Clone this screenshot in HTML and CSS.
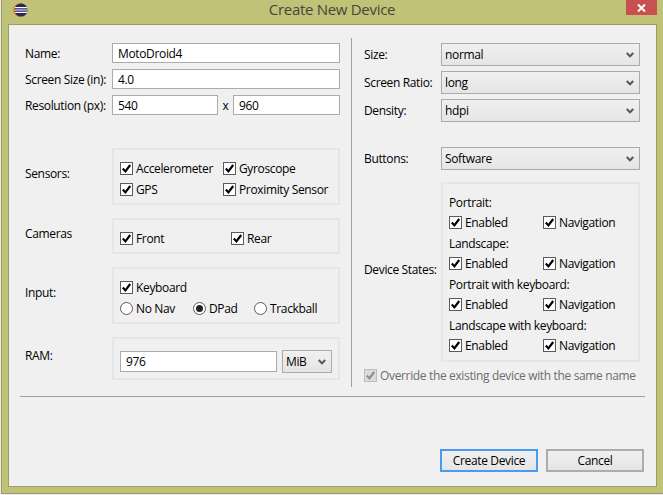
FILE: index.html
```html
<!DOCTYPE html>
<html lang="en">

<head>
    <meta charset="UTF-8">
    <title>Create New Device</title>
    <link rel="stylesheet" href="styles.css">
</head>

<body>
    <svg class="defs" width="0" height="0">
        <symbol id="tick" viewBox="0 0 13 13">
            <path d="M2.8 6.6 5.4 9.4 10.2 3" fill="none" stroke="currentColor" stroke-width="2.2" />
        </symbol>
        <symbol id="chev" viewBox="0 0 8 6">
            <path d="M.8 1 4 4.4 7.2 1" fill="none" stroke="#555" stroke-width="2" />
        </symbol>
    </svg>

    <div class="window">
        <div class="titlebar">
            <svg class="app-icon" width="15" height="14" viewBox="0 0 15 14">
                <circle cx="7" cy="7" r="6.8" fill="#e88a1c" />
                <circle cx="8" cy="7" r="6.6" fill="#2c2560" />
                <path d="M2 4.6h12M1.4 7h13M2 9.4h12" stroke="#fff" stroke-width="1.1" />
            </svg>
            <div class="title">Create New Device</div>
            <div class="close">
                <svg width="9" height="8" viewBox="0 0 9 8">
                    <path d="M1 .5 8 7.5M8 .5 1 7.5" stroke="#fff" stroke-width="2" />
                </svg>
            </div>
        </div>

        <div class="content">
            <div class="columns">
                <div class="left">
                    <div class="field">
                        <label class="lbl">Name:</label>
                        <input class="txt wide" type="text" value="MotoDroid4">
                    </div>
                    <div class="field">
                        <label class="lbl">Screen Size (in):</label>
                        <input class="txt wide" type="text" value="4.0">
                    </div>
                    <div class="field">
                        <label class="lbl">Resolution (px):</label>
                        <input class="txt res-w" type="text" value="540">
                        <span class="times">x</span>
                        <input class="txt res-h" type="text" value="960">
                    </div>

                    <div class="grp-row first">
                        <label class="lbl up">Sensors:</label>
                        <div class="group">
                            <div class="row">
                                <div class="opt sensor"><span class="check"><svg><use href="#tick" /></svg></span>Accelerometer</div>
                                <div class="opt"><span class="check"><svg><use href="#tick" /></svg></span>Gyroscope</div>
                            </div>
                            <div class="row">
                                <div class="opt sensor"><span class="check"><svg><use href="#tick" /></svg></span>GPS</div>
                                <div class="opt"><span class="check"><svg><use href="#tick" /></svg></span>Proximity Sensor</div>
                            </div>
                        </div>
                    </div>

                    <div class="grp-row">
                        <label class="lbl up">Cameras</label>
                        <div class="group">
                            <div class="row">
                                <div class="opt camera"><span class="check"><svg><use href="#tick" /></svg></span>Front</div>
                                <div class="opt"><span class="check"><svg><use href="#tick" /></svg></span>Rear</div>
                            </div>
                        </div>
                    </div>

                    <div class="grp-row">
                        <label class="lbl up">Input:</label>
                        <div class="group">
                            <div class="row">
                                <div class="opt"><span class="check"><svg><use href="#tick" /></svg></span>Keyboard</div>
                            </div>
                            <div class="row">
                                <div class="opt nonav"><span class="radio"></span>No Nav</div>
                                <div class="opt dpad"><span class="radio on"></span>DPad</div>
                                <div class="opt"><span class="radio"></span>Trackball</div>
                            </div>
                        </div>
                    </div>

                    <div class="grp-row">
                        <label class="lbl up">RAM:</label>
                        <div class="group ram">
                            <input class="txt ram-val" type="text" value="976">
                            <div class="select ram-unit">MiB<svg class="chev"><use href="#chev" /></svg></div>
                        </div>
                    </div>
                </div>

                <div class="right">
                    <div class="sel-list">
                        <div class="sel-row">
                            <label class="lbl-r">Size:</label>
                            <div class="select full">normal<svg class="chev"><use href="#chev" /></svg></div>
                        </div>
                        <div class="sel-row">
                            <label class="lbl-r">Screen Ratio:</label>
                            <div class="select full">long<svg class="chev"><use href="#chev" /></svg></div>
                        </div>
                        <div class="sel-row">
                            <label class="lbl-r">Density:</label>
                            <div class="select full">hdpi<svg class="chev"><use href="#chev" /></svg></div>
                        </div>
                    </div>

                    <div class="sel-row buttons-row">
                        <label class="lbl-r">Buttons:</label>
                        <div class="select full">Software<svg class="chev"><use href="#chev" /></svg></div>
                    </div>

                    <div class="states-row">
                        <label class="lbl-r up">Device States:</label>
                        <div class="group states">
                            <div class="state">
                                <div class="row">Portrait:</div>
                                <div class="row">
                                    <div class="opt state-opt"><span class="check"><svg><use href="#tick" /></svg></span>Enabled</div>
                                    <div class="opt"><span class="check"><svg><use href="#tick" /></svg></span>Navigation</div>
                                </div>
                            </div>
                            <div class="state">
                                <div class="row">Landscape:</div>
                                <div class="row">
                                    <div class="opt state-opt"><span class="check"><svg><use href="#tick" /></svg></span>Enabled</div>
                                    <div class="opt"><span class="check"><svg><use href="#tick" /></svg></span>Navigation</div>
                                </div>
                            </div>
                            <div class="state">
                                <div class="row">Portrait with keyboard:</div>
                                <div class="row">
                                    <div class="opt state-opt"><span class="check"><svg><use href="#tick" /></svg></span>Enabled</div>
                                    <div class="opt"><span class="check"><svg><use href="#tick" /></svg></span>Navigation</div>
                                </div>
                            </div>
                            <div class="state">
                                <div class="row">Landscape with keyboard:</div>
                                <div class="row">
                                    <div class="opt state-opt"><span class="check"><svg><use href="#tick" /></svg></span>Enabled</div>
                                    <div class="opt"><span class="check"><svg><use href="#tick" /></svg></span>Navigation</div>
                                </div>
                            </div>
                        </div>
                    </div>

                    <div class="opt override"><span class="check off"><svg><use href="#tick" /></svg></span>Override the existing device with the same name</div>
                </div>
            </div>

            <div class="sep"></div>

            <div class="footer">
                <button class="btn default">Create Device</button>
                <button class="btn">Cancel</button>
            </div>
        </div>
    </div>
</body>

</html>
```

FILE: styles.css
```css
* {
    box-sizing: border-box;
}

body {
    margin: 0;
    background-color: #ececec;
    font-family: "Open Sans", "Liberation Sans", sans-serif;
    font-size: 12px;
    letter-spacing: -0.35px;
    color: #000;
    overflow: hidden;
}

.defs {
    position: absolute;
}

/* window frame */
.window {
    width: 662px;
    height: 494px;
    margin-left: 1px;
    background-color: #bfc277;
    border-left: 1px solid #9b9e60;
    border-bottom: 1px solid #9b9e60;
    padding: 0 6px 6px 6px;
}

.titlebar {
    display: flex;
    height: 24px;
}

.app-icon {
    margin: 3px 0 0 5px;
}

.title {
    flex: 1;
    padding: 0 0 0 10px;
    text-align: center;
    font-size: 15px;
    line-height: 19px;
    letter-spacing: -0.3px;
    color: #45463a;
}

.close {
    display: flex;
    align-items: center;
    justify-content: center;
    width: 31px;
    height: 15px;
    background-color: #c75050;
}

.content {
    width: 649px;
    height: 463px;
    background-color: #f0f0f0;
    border: 1px solid #9b9e60;
}

.columns {
    display: flex;
    padding-top: 13px;
}

/* left column */
.left {
    width: 315px;
    margin-left: 16px;
    padding-top: 5px;
}

.field {
    display: flex;
    align-items: center;
    height: 20px;
    margin-bottom: 6px;
}

.lbl {
    width: 87px;
    flex-shrink: 0;
    white-space: nowrap;
}

.up {
    margin-bottom: 6px;
}

.txt {
    height: 20px;
    padding: 0 5px;
    border: 1px solid #ababab;
    background-color: #fff;
    font: inherit;
    letter-spacing: inherit;
    color: #000;
}

.wide {
    width: 228px;
}

.res-w {
    width: 106px;
}

.times {
    width: 15px;
    text-align: center;
}

.res-h {
    width: 107px;
}

.grp-row {
    display: flex;
    align-items: center;
    margin-top: 13px;
}

.grp-row.first {
    margin-top: 33px;
}

.group {
    width: 228px;
    border: 2px solid #e6e6e6;
    padding: 8px 6px 4px 6px;
}

.row {
    display: flex;
    align-items: center;
    height: 20px;
    margin-bottom: 1px;
}

.group > .row:last-child {
    margin-bottom: 0;
}

.opt {
    display: flex;
    align-items: center;
    white-space: nowrap;
}

.sensor {
    width: 103px;
}

.camera {
    width: 111px;
}

.nonav {
    width: 73px;
}

.dpad {
    width: 61px;
}

.check {
    width: 13px;
    height: 13px;
    margin-right: 3px;
    flex-shrink: 0;
    background-color: #fff;
    border: 1px solid #5a5a5a;
    color: #000;
}

.check svg {
    display: block;
    width: 13px;
    height: 13px;
    margin: -1px;
}

.check.off {
    background-color: #dcdcdc;
    border-color: #bcbcbc;
    color: #8f8f8f;
}

.radio {
    width: 13px;
    height: 13px;
    margin-right: 3px;
    flex-shrink: 0;
    display: flex;
    align-items: center;
    justify-content: center;
    background-color: #fff;
    border: 1px solid #5a5a5a;
    border-radius: 50%;
}

.radio.on::after {
    content: "";
    width: 7px;
    height: 7px;
    border-radius: 50%;
    background-color: #222;
}

.ram {
    display: flex;
    align-items: center;
    gap: 5px;
    height: 43px;
    padding: 11px 6px 5px 6px;
}

.ram-val {
    width: 157px;
    height: 21px;
}

/* combos */
.select {
    display: flex;
    align-items: center;
    justify-content: space-between;
    height: 23px;
    padding: 0 5px 0 3px;
    border: 1px solid #ababab;
    background: linear-gradient(#f0f0f0, #e5e5e5);
}

.chev {
    width: 8px;
    height: 6px;
    flex-shrink: 0;
}

.ram-unit {
    width: 50px;
}

.full {
    width: 199px;
}

/* right column */
.right {
    width: 301px;
    height: 349px;
    margin-left: 11px;
    padding: 5px 0 0 12px;
    border-left: 1px solid #a0a0a0;
}

.sel-list {
    display: flex;
    flex-direction: column;
    gap: 5px;
}

.sel-row {
    display: flex;
    align-items: center;
}

.lbl-r {
    width: 77px;
    flex-shrink: 0;
    white-space: nowrap;
}

.buttons-row {
    margin-top: 25px;
}

.states-row {
    display: flex;
    align-items: center;
    margin-top: 12px;
}

.states {
    width: 199px;
    height: 180px;
    padding: 8px 6px 5px 6px;
}

.state {
    margin-bottom: 1px;
}

.state .row {
    margin-bottom: 0;
}

.state-opt {
    width: 94px;
}

.override {
    height: 20px;
    margin-top: 3px;
    color: #6d6d6d;
}

/* bottom bar */
.sep {
    height: 1px;
    margin: 9px 11px 0 11px;
    background-color: #a0a0a0;
}

.footer {
    display: flex;
    justify-content: flex-end;
    gap: 8px;
    margin-top: 52px;
    padding-right: 12px;
}

.btn {
    width: 98px;
    height: 23px;
    padding: 0;
    border: 2px solid #adadad;
    background: linear-gradient(#f0f0f0, #e5e5e5);
    font: inherit;
    letter-spacing: inherit;
    color: #000;
}

.btn.default {
    border-color: #4a9bf0;
}
```
